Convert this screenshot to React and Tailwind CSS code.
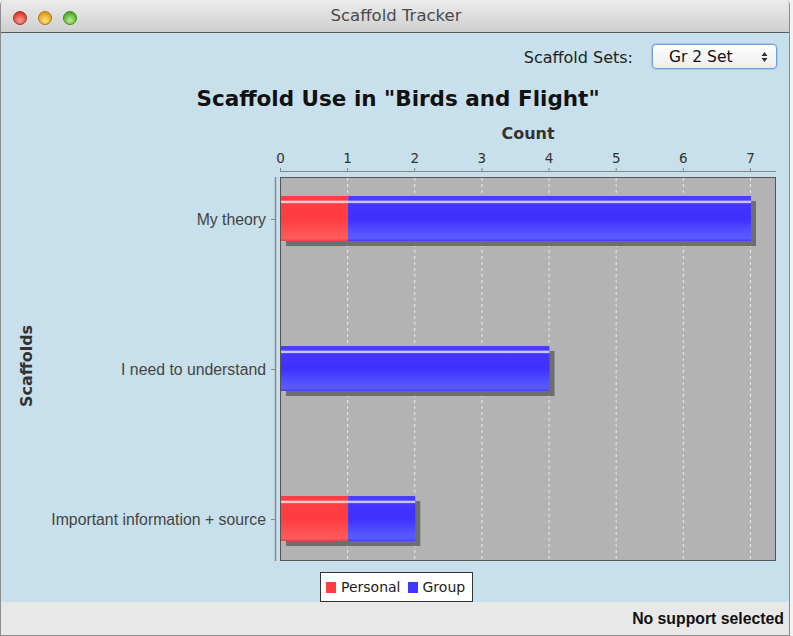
import React from "react";

const X0 = 281;
const U = 67.14;
const xs = (v) => X0 + v * U;

function Bar({ y, personal, total }) {
  const h = 45;
  const xr = xs(personal);
  const xe = xs(total);
  return (
    <g>
      <rect x={X0 + 5} y={y + 5} width={xe - X0} height={h} fill="#6e6e6e" />
      {personal > 0 && <rect x={X0} y={y} width={xr - X0} height={h} fill="url(#gRed)" />}
      <rect x={xr} y={y} width={xe - xr} height={h} fill="url(#gBlue)" />
    </g>
  );
}

function Chart() {
  const cats = [
    { label: "My theory", c: 219, personal: 1, total: 7 },
    { label: "I need to understand", c: 369, personal: 0, total: 4 },
    { label: "Important information + source", c: 519, personal: 1, total: 2 },
  ];
  return (
    <svg width="788" height="452" viewBox="1 120 788 452" className="block">
      <defs>
        <linearGradient id="gBlue" x1="0" y1="0" x2="0" y2="1">
          <stop offset="0" stopColor="#4b3dff" />
          <stop offset="0.095" stopColor="#4b3dff" />
          <stop offset="0.11" stopColor="#c4c4ff" />
          <stop offset="0.145" stopColor="#c4c4ff" />
          <stop offset="0.17" stopColor="#4535ff" />
          <stop offset="0.5" stopColor="#3f30ff" />
          <stop offset="0.85" stopColor="#5656ff" />
          <stop offset="0.94" stopColor="#5a5aff" />
          <stop offset="1" stopColor="#4040f5" />
        </linearGradient>
        <linearGradient id="gRed" x1="0" y1="0" x2="0" y2="1">
          <stop offset="0" stopColor="#ff3d44" />
          <stop offset="0.095" stopColor="#ff3d44" />
          <stop offset="0.11" stopColor="#ffc8c8" />
          <stop offset="0.145" stopColor="#ffc8c8" />
          <stop offset="0.17" stopColor="#ff3f45" />
          <stop offset="0.5" stopColor="#ff3c42" />
          <stop offset="0.85" stopColor="#ff5656" />
          <stop offset="0.94" stopColor="#ff5a5a" />
          <stop offset="1" stopColor="#f04040" />
        </linearGradient>
      </defs>

      <text
        x="528"
        y="139"
        textAnchor="middle"
        fontFamily="'DejaVu Sans', sans-serif"
        fontWeight="bold"
        fontSize="16"
        fill="#333"
      >
        Count
      </text>

      {[0, 1, 2, 3, 4, 5, 6, 7].map((v) => (
        <g key={v}>
          <text
            x={xs(v) - 0.5}
            y="163"
            textAnchor="middle"
            fontFamily="'DejaVu Sans', sans-serif"
            fontSize="13.5"
            fill="#333"
          >
            {v}
          </text>
          <line x1={xs(v) - 0.5} y1="168" x2={xs(v) - 0.5} y2="172" stroke="#888" strokeWidth="1" />
        </g>
      ))}
      <line x1="280" y1="171.5" x2="776" y2="171.5" stroke="#888" strokeWidth="1" />

      <rect x="280.5" y="177.5" width="495" height="383" fill="#b3b3b3" stroke="#555" strokeWidth="1" />
      {[1, 2, 3, 4, 5, 6, 7].map((v) => (
        <line
          key={v}
          x1={xs(v) - 0.5}
          y1="178"
          x2={xs(v) - 0.5}
          y2="560"
          stroke="#e8e8e8"
          strokeWidth="1"
          strokeDasharray="3 3"
        />
      ))}

      <line x1="275.5" y1="177" x2="275.5" y2="561" stroke="#888" strokeWidth="1.5" />

      {cats.map((c) => (
        <g key={c.label}>
          <text
            x="266"
            y={c.c + 5.5}
            textAnchor="end"
            fontFamily="'Liberation Sans', Arial, sans-serif"
            fontSize="15.8"
            fill="#444"
          >
            {c.label}
          </text>
          <line x1="271" y1={c.c + 0.5} x2="275" y2={c.c + 0.5} stroke="#888" strokeWidth="1" />
          <Bar y={c.c - 23} personal={c.personal} total={c.total} />
        </g>
      ))}

      <text
        transform="translate(32 366) rotate(-90)"
        textAnchor="middle"
        fontFamily="'DejaVu Sans', sans-serif"
        fontWeight="bold"
        fontSize="16"
        fill="#333"
      >
        Scaffolds
      </text>
    </svg>
  );
}

function Light({ from, to, border }) {
  return (
    <span
      className="block w-[14px] h-[14px] rounded-full border"
      style={{ background: `radial-gradient(circle at 50% 70%, ${from} 0%, ${to} 75%)`, borderColor: border }}
    />
  );
}

export default function App() {
  return (
    <div className="w-[793px] h-[636px] bg-[#f2f2f2] overflow-hidden">
      <div className="w-[790px] h-[636px] flex flex-col rounded-t-[5px] overflow-hidden border-x border-b border-[#8d8d8d]">
        <div className="h-[33px] shrink-0 relative flex items-center justify-center bg-gradient-to-b from-[#ececec] to-[#cfcfcf] border-b border-[#5a5a5a]">
          <div className="absolute left-[12px] top-[11px] flex gap-[11px]">
            <Light from="#ff9a90" to="#d9372f" border="#a3302b" />
            <Light from="#ffe27a" to="#e09a18" border="#a87316" />
            <Light from="#b8f08a" to="#4ea829" border="#3f8a23" />
          </div>
          <span className="text-[16.5px] text-[#4a4a4a] font-['DejaVu_Sans',sans-serif] pl-[2px]">Scaffold Tracker</span>
        </div>

        <div className="flex-1 flex flex-col bg-[#c8e0ec]">
          <div className="h-[25px] mt-[11px] flex items-center justify-end pr-[12px]">
            <span className="text-[16px] text-[#222] font-['DejaVu_Sans',sans-serif] mr-[19px] pt-[2px]">Scaffold Sets:</span>
            <div className="w-[125px] h-[25px] rounded-[4px] border border-[#6d9fd8] shadow-[0_0_0_1px_#a9c8ee] bg-gradient-to-b from-[#ffffff] to-[#ececec] flex items-center justify-between pl-[16px] pr-[8px]">
              <span className="text-[15.5px] text-[#111] font-['DejaVu_Sans',sans-serif] leading-none pt-[2px]">Gr 2 Set</span>
              <svg width="7" height="12" viewBox="0 0 7 12">
                <path d="M3.5 1 L6.5 5 L0.5 5 Z" fill="#333" />
                <path d="M3.5 11 L6.5 7 L0.5 7 Z" fill="#333" />
              </svg>
            </div>
          </div>
          <div className="h-[24px] mt-[18px] flex items-center justify-center pl-[6px]">
            <span className="text-[21.5px] font-bold text-[#111] font-['DejaVu_Sans',sans-serif] leading-none">
              Scaffold Use in "Birds and Flight"
            </span>
          </div>
          <div className="mt-[9px]">
            <Chart />
          </div>
          <div className="h-[30px] pl-[319px]">
            <div className="w-[153px] h-[30px] border border-[#333] bg-white flex items-center pl-[5px] gap-[5px] font-['DejaVu_Sans',sans-serif] text-[14px] text-[#222]">
              <span className="w-[10px] h-[11px] bg-[#ff3d44]" />
              <span>Personal</span>
              <span className="w-[10px] h-[11px] bg-[#4136ff] ml-[2px]" />
              <span>Group</span>
            </div>
          </div>
        </div>

        <div className="h-[33px] shrink-0 bg-[#e8e8e8] flex items-center justify-end pr-[5px]">
          <span className="text-[15.8px] font-bold text-[#111] font-['Liberation_Sans',Arial,sans-serif]">No support selected</span>
        </div>
      </div>
    </div>
  );
}
